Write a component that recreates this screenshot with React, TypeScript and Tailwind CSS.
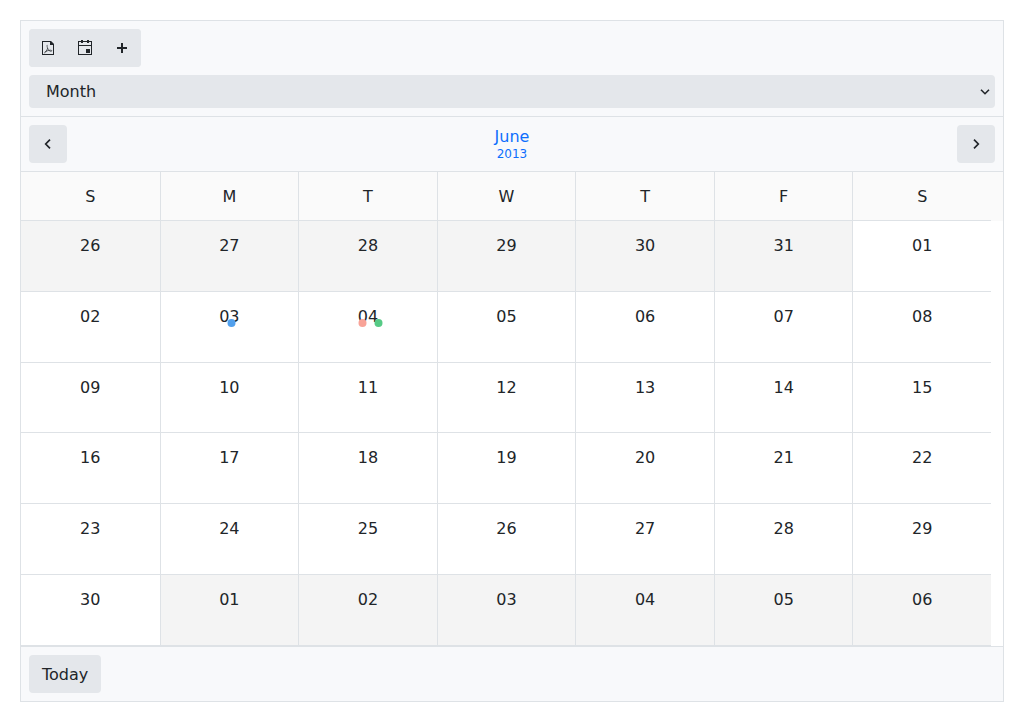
import type { ReactNode } from 'react';

type Day = { label: string; outside?: boolean };
type Marker = 'blue' | 'pink' | 'green';

const weekdays = [
  ['S', 'Sunday'],
  ['M', 'Monday'],
  ['T', 'Tuesday'],
  ['W', 'Wednesday'],
  ['T', 'Thursday'],
  ['F', 'Friday'],
  ['S', 'Saturday'],
];

const FIRST_VISIBLE = new Date(2013, 4, 26);

const weeks: Day[][] = Array.from({ length: 6 }, (_, week) =>
  Array.from({ length: 7 }, (_, day) => {
    const date = new Date(FIRST_VISIBLE);
    date.setDate(date.getDate() + week * 7 + day);
    return {
      label: String(date.getDate()).padStart(2, '0'),
      outside: date.getMonth() !== 5,
    };
  }),
);

const events: Record<string, Marker[]> = {
  '03': ['blue'],
  '04': ['pink', 'green'],
};

const markerColor: Record<Marker, string> = {
  blue: 'bg-[#51a0ed]',
  pink: 'bg-[#f8a398]',
  green: 'bg-[#56ca85]',
};

function Icon({ children }: { children: ReactNode }) {
  return (
    <svg viewBox="0 0 16 16" className="size-4 fill-current" aria-hidden="true">
      {children}
    </svg>
  );
}

const iconButton =
  'flex size-[38px] items-center justify-center rounded bg-[#e4e7eb] text-[#212529]';

function Toolbar() {
  return (
    <div className="flex flex-col gap-2 border-b border-[#dee2e6] bg-[#f8f9fb] p-2">
      <div className="flex -space-x-px self-start rounded bg-[#e4e7eb]">
        <button type="button" aria-label="Export to PDF" className={iconButton}>
          <Icon>
            <path d="M2 1v14h12V4.5L10.5 1H2zm11 13H3V2h7v3h3v9z" />
            <path d="M10 1h1l3 3v1h-4z" />
            <path
              d="M7.5 5c-.7 0-.4 2 .1 3.200C7.200 9.800 5.500 12.800 4.300 13M7.600 8.200c.7 1.700 2 3 3.200 3.100 1.500.1 1.300-1.100 0-1.100-1.900 0-4.300.7-6 1.800"
              className="fill-none stroke-current stroke-[0.7]"
            />
          </Icon>
        </button>
        <button type="button" aria-label="Export to iCalendar" className={iconButton}>
          <Icon>
            <path d="M12 1V0h-2v1H6V0H4v1H1v14h14V1h-3zm2 13H2V6h12v8zM2 5V2h2v1h2V2h4v1h2V2h2v3H2z" />
            <path d="M9 9h4v4H9z" />
          </Icon>
        </button>
        <button type="button" aria-label="Add event" className={iconButton}>
          <Icon>
            <path d="M9 7V3H7v4H3v2h4v4h2V9h4V7z" />
          </Icon>
        </button>
      </div>
      <div className="relative">
        <select
          aria-label="View"
          defaultValue="Month"
          className="block h-[33px] w-full appearance-none rounded bg-[#e4e7eb] px-[17px] text-base text-[#212529]"
        >
          <option>Day</option>
          <option>Week</option>
          <option>Month</option>
          <option>Agenda</option>
        </select>
        <svg
          viewBox="0 0 10 6"
          className="pointer-events-none absolute right-[5px] top-3.5 h-1.5 w-2.5 fill-none stroke-[#212529] stroke-[1.6]"
          aria-hidden="true"
        >
          <path d="M1 .7 5 4.7 9 .7" />
        </svg>
      </div>
    </div>
  );
}

function MonthNavigation() {
  return (
    <div className="flex items-center justify-between border-b border-[#dee2e6] bg-[#f8f9fb] p-2">
      <button type="button" aria-label="Previous month" className={iconButton}>
        <Icon>
          <path d="M10 3.700 5.700 8l4.300 4.300" className="fill-none stroke-current stroke-[1.700]" />
        </Icon>
      </button>
      <a href="#june" className="flex flex-col items-center text-[#0d6efd]">
        <span className="text-base leading-5">June</span>
        <span className="text-xs leading-[14px]">2013</span>
      </a>
      <button type="button" aria-label="Next month" className={iconButton}>
        <Icon>
          <path d="M6 3.700 10.300 8 6 12.300" className="fill-none stroke-current stroke-[1.700]" />
        </Icon>
      </button>
    </div>
  );
}

function DayCell({ day }: { day: Day }) {
  const markers = day.outside ? [] : (events[day.label] ?? []);
  return (
    <td
      className={`block border-b border-l border-[#dee2e6] pt-[13px] text-center first:border-l-0 ${
        day.outside ? 'bg-[#f4f4f4]' : 'bg-white'
      }`}
    >
      <span className="relative inline-block">
        {day.label}
        {markers.length > 0 && (
          <span className="absolute left-1/2 top-3.5 flex -translate-x-1/2 gap-2 pl-[5px]">
            {markers.map((marker) => (
              <span key={marker} className={`size-2 rounded-full ${markerColor[marker]}`} />
            ))}
          </span>
        )}
      </span>
    </td>
  );
}

function MonthGrid() {
  return (
    <table aria-label="June 2013" className="flex flex-1 flex-col bg-white">
      <thead className="block bg-[#fafafa] pr-3">
        <tr className="grid grid-cols-7">
          {weekdays.map(([letter, name]) => (
            <th
              key={name}
              scope="col"
              abbr={name}
              className="block border-b border-l border-[#dee2e6] pb-[11px] pt-[13px] text-center font-normal first:border-l-0"
            >
              {letter}
            </th>
          ))}
        </tr>
      </thead>
      <tbody className="flex flex-1 flex-col pr-3">
        {weeks.map((week, index) => (
          <tr key={index} className="grid min-h-12 flex-1 grid-cols-7">
            {week.map((day, column) => (
              <DayCell key={column} day={day} />
            ))}
          </tr>
        ))}
      </tbody>
    </table>
  );
}

export default function App() {
  return (
    <div className="flex min-h-screen flex-col bg-white p-5 font-['DejaVu_Sans',sans-serif] text-base text-[#212529]">
      <main className="flex flex-1 flex-col border border-[#dee2e6]">
        <Toolbar />
        <MonthNavigation />
        <MonthGrid />
        <footer className="border-t border-[#dee2e6] bg-[#f8f9fb] p-2">
          <button type="button" className="rounded bg-[#e4e7eb] px-[13px] pb-1.5 pt-2">
            Today
          </button>
        </footer>
      </main>
    </div>
  );
}
